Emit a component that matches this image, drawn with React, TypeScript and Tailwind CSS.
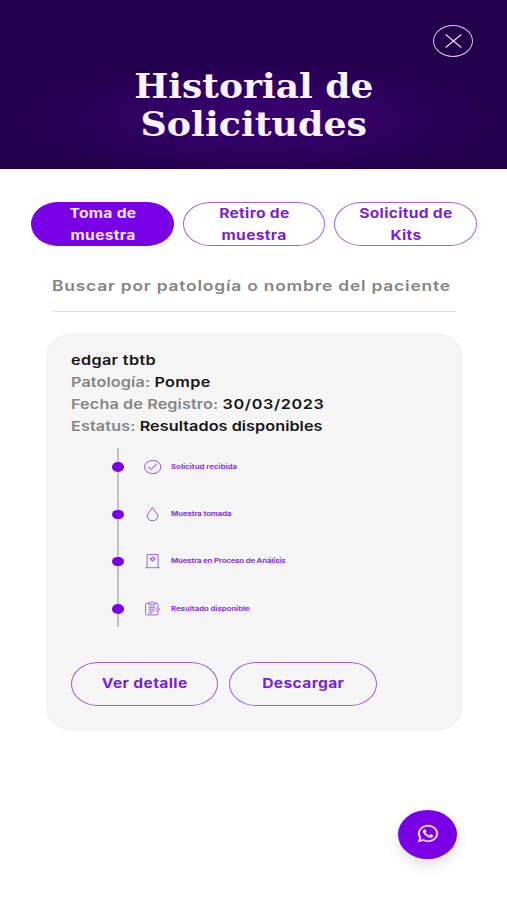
import type { ReactNode } from "react";
import clsx from "clsx";

const tabs = [
    { lines: ["Toma de", "muestra"], active: true },
    { lines: ["Retiro de", "muestra"], active: false },
    { lines: ["Solicitud de", "Kits"], active: false },
];

function CheckIcon() {
    return (
        <svg className="h-[15px] w-[18px]" viewBox="0 0 18 15" fill="none" stroke="currentColor" strokeWidth="0.9">
            <ellipse cx="8.7" cy="7" rx="8.1" ry="6.6" />
            <path d="M4.1 7.6 7.2 9.8 13.1 4.7 12.4 4.1 7.2 8.5 4.8 6.9Z" strokeWidth="0.6" />
        </svg>
    );
}

function DropIcon() {
    return (
        <svg className="h-[15px] w-[18px]" viewBox="0 0 18 15" fill="none" stroke="currentColor" strokeWidth="0.9">
            <path d="M8.5.7C7.2 3.1 3.1 6.6 3.1 9.3c0 2.6 2.3 4.4 5.4 4.4s5.4-1.8 5.4-4.4C13.9 6.600 9.800 3.100 8.500.7Z" />
        </svg>
    );
}

function LabIcon() {
    return (
        <svg className="h-[15px] w-[18px]" viewBox="0 0 18 15" fill="none" stroke="currentColor" strokeWidth="0.8">
            <path d="M3.1 13.6V.5h11v13.1M1.5 13.7h14.1" />
            <path d="M7.900 2.900h1.400v1.400H11v1.400H9.300v1.400H7.900V5.700H6.200V4.300h1.700Z" strokeWidth="0.8" />
        </svg>
    );
}

function ReportIcon() {
    return (
        <svg className="h-[15px] w-[18px]" viewBox="0 0 18 15" fill="none" stroke="currentColor" strokeWidth="0.8">
            <path d="M5.3 2.2H2.9c-.8 0-1.4.5-1.4 1.2v9.3c0 .7.6 1.2 1.4 1.2h9.7c.8 0 1.4-.5 1.4-1.2V10M11 2.2h1.6c.8 0 1.4.5 1.4 1.2v3.4" />
            <path d="M5.3 1.7h1.5c.2-1.300 2.400-1.300 2.600 0h1.500v2.300H5.300ZM4.500 6.300h6.800M4.500 8.200h6.800M4.500 10.100h5.700M4.500 12h3.600" />
            <path d="M12.3 7.3h2.3l1.2 1-1.2 1.1h-2.3" />
        </svg>
    );
}

function CloseIcon() {
    return (
        <svg className="h-[14px] w-[17px]" viewBox="0 0 17 14" fill="none" stroke="currentColor" strokeWidth="1.2">
            <path d="m.7.5 15.6 13M16.3.5.7 13.5" />
        </svg>
    );
}

function WhatsappIcon() {
    return (
        <svg className="h-[17px] w-5 overflow-visible" viewBox="0 32 448 448" preserveAspectRatio="none" fill="currentColor" stroke="currentColor" strokeWidth="8">
            <path d="M380.9 97.1C339 55.1 283.2 32 223.9 32c-122.4 0-222 99.6-222 222 0 39.1 10.2 77.3 29.6 111L0 480l117.7-30.9c32.4 17.7 68.9 27 106.1 27h.1c122.3 0 224.1-99.6 224.1-222 0-59.3-25.2-115-67.1-157zm-157 341.6c-33.2 0-65.7-8.9-94-25.7l-6.7-4-69.8 18.3L72 359.2l-4.4-7c-18.5-29.4-28.2-63.3-28.2-98.2 0-101.7 82.8-184.5 184.6-184.5 49.3 0 95.6 19.2 130.4 54.1 34.8 34.9 56.2 81.2 56.1 130.5 0 101.8-84.9 184.6-186.6 184.6zm101.2-138.2c-5.5-2.8-32.8-16.2-37.9-18-5.1-1.9-8.8-2.8-12.5 2.8-3.7 5.6-14.3 18-17.6 21.8-3.2 3.7-6.5 4.2-12 1.4-32.6-16.3-54-29.1-75.5-66-5.7-9.8 5.7-9.1 16.3-30.3 1.8-3.7.9-6.9-.5-9.7-1.4-2.8-12.5-30.1-17.1-41.2-4.5-10.8-9.1-9.3-12.5-9.5-3.2-.2-6.9-.2-10.6-.2-3.7 0-9.7 1.4-14.8 6.9-5.1 5.6-19.4 19-19.4 46.3 0 27.3 19.9 53.7 22.6 57.4 2.8 3.7 39.1 59.7 94.8 83.8 35.2 15.2 49 16.5 66.6 13.9 10.7-1.6 32.8-13.4 37.4-26.4 4.6-13 4.6-24.1 3.2-26.4-1.3-2.5-5-3.9-10.5-6.6z" />
        </svg>
    );
}

const steps = [
    { label: "Solicitud recibida", icon: <CheckIcon />, tracking: "tracking-normal" },
    { label: "Muestra tomada", icon: <DropIcon />, tracking: "tracking-[-0.1px]" },
    { label: "Muestra en Proceso de Análisis", icon: <LabIcon />, tracking: "tracking-[-0.14px]" },
    { label: "Resultado disponible", icon: <ReportIcon />, tracking: "tracking-[-0.05px]" },
];

function Field({ label, className, children }: { label?: string; className: string; children: ReactNode }) {
    return (
        <p className="w-max origin-left scale-x-[1.2]">
            {label && <span className="tracking-[0.1px] text-[#858585]">{label} </span>}
            <span className={className}>{children}</span>
        </p>
    );
}

function OutlineButton({ children }: { children: ReactNode }) {
    return (
        <button className="flex h-11 w-[147.5px] items-center justify-center rounded-[27px/22px] border border-[#9a5de0] text-[13px] font-bold text-[#7a1fd6]">
            <span className="scale-x-[1.2] tracking-[0.3px]">{children}</span>
        </button>
    );
}

export default function App() {
    return (
        <div className="relative h-[900px] w-full overflow-hidden bg-white font-[Inter,sans-serif]">
            <header className="relative flex h-[169px] flex-col items-center bg-[#22004b] bg-[radial-gradient(ellipse_250px_62px_at_51%_70%,#3a0073_0%,#330067_35%,#22004b_100%)] pt-[67px]">
                <button
                    aria-label="Cerrar"
                    className="absolute top-[25px] right-[34px] flex h-8 w-10 items-center justify-center rounded-[50%] border border-[#d9cce6] text-[#e4daee]"
                >
                    <CloseIcon />
                </button>
                <h1 className="text-center font-['DejaVu_Serif',serif] text-[34px] leading-[38px] font-bold text-[#f7f2fc]">
                    <span className="block scale-x-[1.06]">Historial de</span>
                    <span className="block scale-x-[1.07]">Solicitudes</span>
                </h1>
            </header>

            <nav className="mt-[33px] ml-[31px] flex gap-[9px]">
                {tabs.map((tab) => (
                    <button
                        key={tab.lines.join(" ")}
                        className={clsx(
                            "flex h-11 w-[142.5px] flex-col items-center justify-center rounded-[27px/22px] border pl-px text-[13px] leading-[22px] font-bold",
                            tab.active ? "border-[#7a00e6] bg-[#7a00e6] text-[#f3e8ff]" : "border-[#a065e2] text-[#7a1fd6]",
                        )}
                    >
                        {tab.lines.map((line) => (
                            <span key={line} className="scale-x-[1.2] tracking-[0.25px]">{line}</span>
                        ))}
                    </button>
                ))}
            </nav>

            <div className="mt-[28px] ml-[52px] flex h-[38px] w-[404px] border-b border-[#dedede] text-[14.5px] leading-[24px] font-semibold text-[#858585]">
                <span className="origin-left scale-x-[1.2] tracking-[0.66px] whitespace-nowrap">Buscar por patología o nombre del paciente</span>
            </div>

            <section className="mt-[20.5px] ml-[45.5px] h-[398.5px] w-[417px] rounded-[27px/22px] bg-[#f5f5f5] px-[25px] pt-4">
                <div className="text-[13.5px] leading-[22px] font-semibold text-[#161616]">
                    <Field className="tracking-[0.3px]">edgar tbtb</Field>
                    <Field label="Patología:" className="tracking-[0.3px]">Pompe</Field>
                    <Field label="Fecha de Registro:" className="tracking-[0.55px]">30/03/2023</Field>
                    <Field label="Estatus:" className="tracking-[0.05px]">Resultados disponibles</Field>
                </div>

                <div className="relative mt-[11.5px] ml-[41.5px] h-[179px]">
                    <div className="ml-[5px] h-full w-[2px] bg-[#c2c2c2]" />
                    <ul className="absolute inset-0 pt-[8px]">
                        {steps.map((step) => (
                            <li key={step.label} className="mb-[25.3px] flex h-[22px] items-center text-[#8d40de]">
                                <span className="mr-[20px] h-[9.5px] w-[11.5px] rounded-[50%] bg-[#7a00e6]" />
                                {step.icon}
                                <span className={clsx("mt-px ml-[9.5px] origin-left scale-x-[1.2] text-[6.5px] font-bold whitespace-nowrap text-[#8a35e0]", step.tracking)}>
                                    {step.label}
                                </span>
                            </li>
                        ))}
                    </ul>
                </div>

                <div className="mt-[35px] flex gap-[11px]">
                    <OutlineButton>Ver detalle</OutlineButton>
                    <OutlineButton>Descargar</OutlineButton>
                </div>
            </section>

            <button
                aria-label="WhatsApp"
                className="absolute top-[810px] left-[398px] flex h-[49px] w-[59px] items-center justify-center rounded-[50%] bg-[#7a00e6] pb-[3px] text-[#f3e8ff] shadow-[0_6px_14px_rgba(0,0,0,0.12)]"
            >
                <WhatsappIcon />
            </button>
        </div>
    );
}
